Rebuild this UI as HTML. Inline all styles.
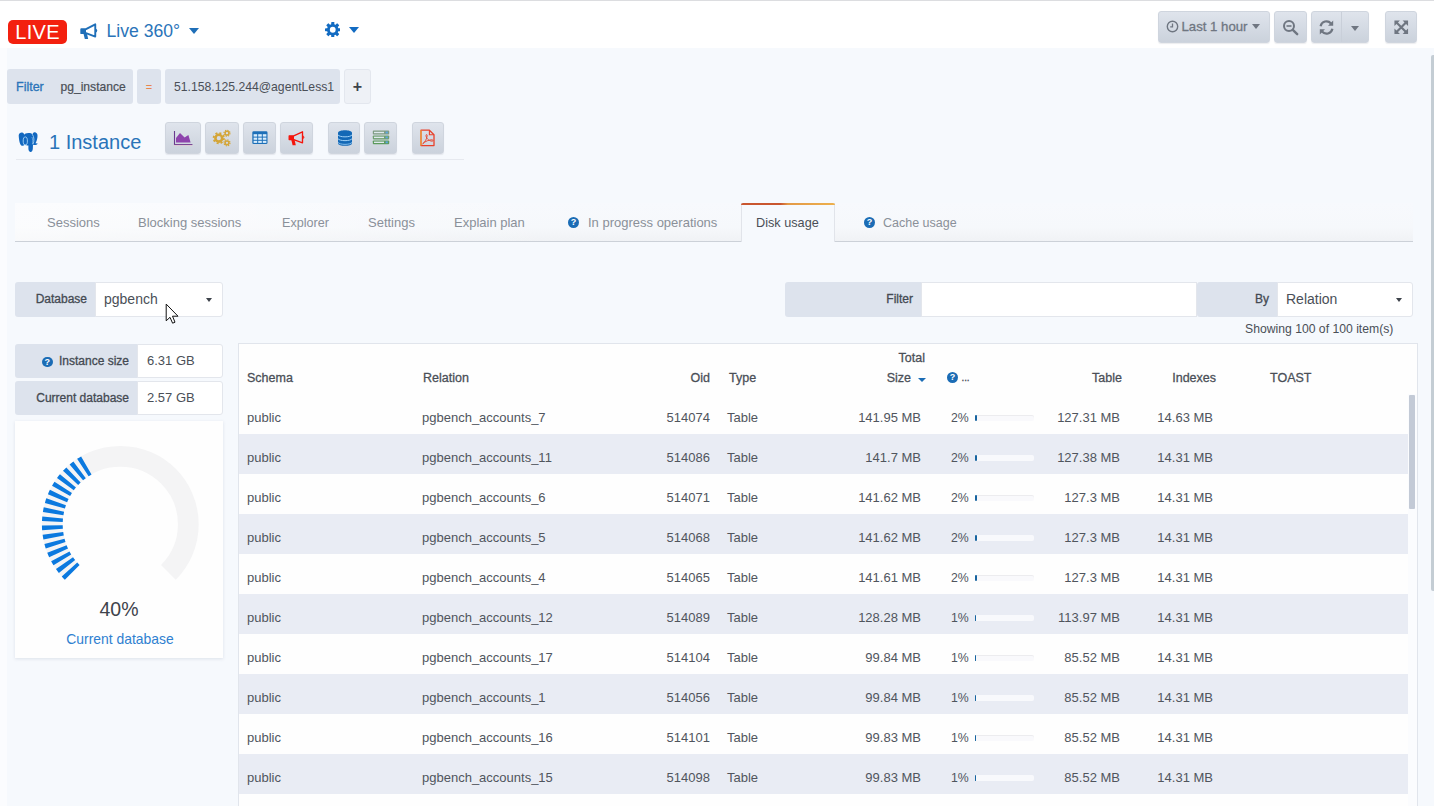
<!DOCTYPE html>
<html>
<head>
<meta charset="utf-8">
<title>Live 360</title>
<style>
*{box-sizing:border-box;margin:0;padding:0}
html,body{width:1434px;height:806px;overflow:hidden}
body{font-family:"Liberation Sans",sans-serif;background:#f6f9fd;color:#4a4f57;position:relative;font-size:13px}
.abs{position:absolute}
#topline{left:0;top:0;width:1434px;height:1px;background:#dcdde0}
#header{left:0;top:1px;width:1434px;height:47px;background:#fff}
#leftstrip{left:0;top:48px;width:7px;height:758px;background:#fbfcfe}
#live{left:8px;top:20px;width:59px;height:24px;background:#f3200f;border-radius:5px;color:#fff;font-size:20px;line-height:24px;text-align:center;letter-spacing:0.3px}
#title{left:106.500px;top:19px;font-size:17.600px;line-height:24px;color:#2a74b9;white-space:nowrap}
.caret{width:0;height:0;border-left:5px solid transparent;border-right:5px solid transparent;border-top:6px solid #1f6fb8}
.btn{border-radius:3px;background:linear-gradient(#dfe4ec,#cbd2dc);border:1px solid #cfd5de;box-shadow:0 1px 1px rgba(120,130,150,.15)}
.chip{background:#dde3ed;border-radius:3px;height:35px;top:69px;line-height:36px;font-size:12.200px;color:#4a4f57;white-space:nowrap}
.tab{top:213px;font-size:13px;line-height:20px;color:#8a9099;white-space:nowrap}
.lbl{background:#dde3ed;font-size:12px;color:#444a52;text-align:right;white-space:nowrap;-webkit-text-stroke:0.3px #444a52}
.inp{background:#fff;border:1px solid #e3e6ec;font-size:14.5px;color:#4a4f57;white-space:nowrap}
.q{width:11px;height:11px;border-radius:50%;background:#1b6cb5;color:#fff;font-size:9px;line-height:11px;text-align:center;font-weight:bold}
.th{font-size:12.5px;color:#4a4f57;white-space:nowrap;-webkit-text-stroke:0.28px #4a4f57;line-height:16px}
.row{left:239px;width:1169px;height:40px}
.row.alt{background:#e9ecf4}
.c{position:absolute;top:4px;line-height:40px;font-size:13px;color:#50555d;white-space:nowrap}
.r{text-align:right}
.bar{position:absolute;left:736px;top:21px;width:59px;height:6px;border-radius:2px;background:#f9f9fc;box-shadow:inset 0 1px 0 rgba(0,0,0,.05)}
.row.alt .bar{background:#f8f9fc;box-shadow:none}
.bar i{position:absolute;left:0;top:0;width:2.200px;height:6px;background:#17649f;border-radius:1px}
</style>
</head>
<body>
<div class="abs" id="header"></div>
<div class="abs" id="topline"></div>
<div class="abs" id="leftstrip"></div>

<!-- header -->
<div class="abs" id="live">LIVE</div>
<svg class="abs" style="left:79.500px;top:23px" width="20" height="18" viewBox="0 0 19 17"><path d="M2 6h4l8-5v12l-8-4H2z M4 10h3l1 5H5z" fill="none"/><path d="M1.2 5.8h4.5L14.5 1.2v11.6L5.7 9.6H1.2z" fill="none" stroke="#1f6fb8" stroke-width="1.8" stroke-linejoin="round"/><path d="M1.2 5.8h4.5v3.8H1.2z" fill="#1f6fb8"/><path d="M3.2 9.6h3.3l1.3 5.6H4.6z" fill="#1f6fb8"/><path d="M15.2 5.3a2 2 0 0 1 0 3.6z" fill="#1f6fb8"/></svg>
<div class="abs" id="title">Live 360°</div>
<div class="abs caret" style="left:189px;top:28px"></div>

<!-- gear -->
<svg class="abs" style="left:324.800px;top:21.800px" width="15.500" height="15.500" viewBox="0 0 16 16"><g fill="#126bc2"><circle cx="8" cy="8" r="5.900"/><rect x="6.400" y="0" width="3.200" height="16" rx=".5"/><rect x="6.400" y="0" width="3.200" height="16" rx=".5" transform="rotate(45 8 8)"/><rect x="6.400" y="0" width="3.200" height="16" rx=".5" transform="rotate(90 8 8)"/><rect x="6.400" y="0" width="3.200" height="16" rx=".5" transform="rotate(135 8 8)"/></g><circle cx="8" cy="8" r="3" fill="#fff"/></svg>
<div class="abs caret" style="left:349px;top:27px;border-top-color:#126bc2"></div>

<!-- right header buttons -->
<div class="abs btn" style="left:1158px;top:11px;width:112px;height:32px"></div>
<svg class="abs" style="left:1166px;top:19.500px" width="13" height="13" viewBox="0 0 13 13"><circle cx="6.5" cy="6.5" r="5.2" fill="none" stroke="#6f7681" stroke-width="1.4"/><path d="M6.5 3.4v3.4H4.2" fill="none" stroke="#6f7681" stroke-width="1.3"/></svg>
<div class="abs" style="left:1181.500px;top:17px;font-size:13.200px;line-height:20px;color:#6f7681;white-space:nowrap;-webkit-text-stroke:0.3px #6f7681">Last 1 hour</div>
<div class="abs caret" style="left:1252px;top:24px;border-left-width:4.5px;border-right-width:4.5px;border-top:5px solid #6f7681"></div>

<div class="abs btn" style="left:1274px;top:11px;width:33px;height:32px"></div>
<svg class="abs" style="left:1282px;top:19px" width="17" height="17" viewBox="0 0 17 17"><circle cx="7" cy="7" r="5" fill="none" stroke="#6f7681" stroke-width="2"/><path d="M4.5 7h5" stroke="#6f7681" stroke-width="1.6"/><path d="M10.8 10.8l4.4 4.4" stroke="#6f7681" stroke-width="2.4" stroke-linecap="round"/></svg>

<div class="abs btn" style="left:1311px;top:11px;width:58px;height:32px"></div>
<div class="abs" style="left:1341px;top:12px;width:1px;height:30px;background:#c9cfd9"></div>
<svg class="abs" style="left:1318px;top:19px" width="17" height="17" viewBox="0 0 17 17"><g fill="none" stroke="#6f7681" stroke-width="2.2"><path d="M2.6 7.2A6 6 0 0 1 13 4.4"/><path d="M14.4 9.8A6 6 0 0 1 4 12.6"/></g><path d="M15.2 1.6v5.2H10z" fill="#6f7681"/><path d="M1.8 15.4v-5.2H7z" fill="#6f7681"/></svg>
<div class="abs caret" style="left:1351px;top:26px;border-left-width:4.5px;border-right-width:4.5px;border-top:5px solid #6f7681"></div>

<div class="abs btn" style="left:1385px;top:11px;width:32px;height:32px"></div>
<svg class="abs" style="left:1394px;top:20px" width="14.500" height="14.500" viewBox="0 0 16 16"><g stroke="#6f7681" stroke-width="2.4"><path d="M2.5 2.5l11 11M13.5 2.5l-11 11"/></g><g fill="#6f7681"><path d="M.5.5h6l-6 6z"/><path d="M15.5.5v6l-6-6z"/><path d="M.5 15.5v-6l6 6z"/><path d="M15.5 15.5h-6l6-6z"/></g></svg>

<!-- filter chips -->
<div class="abs chip" style="left:7px;width:126px"></div>
<div class="abs" style="left:16px;top:69px;line-height:36px;font-size:12.500px;color:#2a74b9;-webkit-text-stroke:0.3px #2a74b9">Filter</div>
<div class="abs" style="left:60.500px;top:69px;line-height:36px;font-size:12.100px;color:#4a4f57;-webkit-text-stroke:0.2px #4a4f57">pg_instance</div>
<div class="abs chip" style="left:137px;width:24px;text-align:center;color:#e8864f;font-size:11px">=</div>
<div class="abs chip" style="left:165px;width:175px;padding-left:9px">51.158.125.244@agentLess1</div>
<div class="abs chip" style="left:344px;width:27px;background:#eef1f6;border:1px solid #e3e7ee;text-align:center;color:#3e434b;font-weight:bold;font-size:16px;line-height:33px">+</div>

<!-- instance row -->
<div class="abs" style="left:49px;top:129px;font-size:20px;line-height:26px;color:#2a74b9;white-space:nowrap">1 Instance</div>
<div class="abs" style="left:16px;top:159px;width:448px;height:1px;background:#e6e9ef"></div>
<div class="abs btn" style="left:165px;top:122px;width:36px;height:32px"></div>
<div class="abs btn" style="left:205px;top:122px;width:34px;height:32px"></div>
<div class="abs btn" style="left:243px;top:122px;width:33px;height:32px"></div>
<div class="abs btn" style="left:280px;top:122px;width:33px;height:32px"></div>
<div class="abs btn" style="left:328px;top:122px;width:32px;height:32px"></div>
<div class="abs btn" style="left:364px;top:122px;width:33px;height:32px"></div>
<div class="abs btn" style="left:412px;top:122px;width:32px;height:32px"></div>

<!-- elephant -->
<svg class="abs" style="left:18px;top:131px" width="21" height="22" viewBox="0 0 21 22">
<path d="M.7 4.500C.7 2.200 2.500 1.300 4 1.400C5.400 1.500 6 2.400 6.300 3.800C6.800 2.400 8 2 10.500 1.900C12.500 1.900 13.800 2.300 14.400 3.400C14.800 1.600 16.400 1.100 17.600 1.400C19.400 1.900 19.800 4 19.400 6.500C19 9 18.400 10.800 17.500 12.300L19.700 12.400C19.100 13.800 16.600 14.300 15 13.700L14.800 18C14.600 20.400 13.400 21.100 12.400 20.900C11 20.600 10.400 19.400 10.400 17.600L10.400 14.500C9 14.500 7.600 14.100 6.800 13.300C6 14.500 5 15 4 14.800C2 14.400 1 10 .7 4.500Z" fill="#1268c0"/>
<g fill="none" stroke="#b5defb" stroke-width=".8"><ellipse cx="7.300" cy="10" rx="2.100" ry="4.100"/><path d="M14.300 3.300C16.300 6 16.400 10 14.900 13.400"/><path d="M13.900 6C14.900 8 14.900 11 14.400 13" stroke-width=".5"/></g>
</svg>

<!-- icon 1 area chart -->
<svg class="abs" style="left:173px;top:130px" width="21" height="17" viewBox="0 0 21 17"><path d="M3 12.6V8L7 3l4.6 4.6L15.4 5l2.2 7.6z" fill="#8e44ad"/><path d="M1.5 1v13.5H19.4" fill="none" stroke="#6a3a8f" stroke-width="1.1"/><path d="M1 15.3H19.4" stroke="#e9b9c6" stroke-width=".6"/></svg>
<!-- icon 2 gears -->
<svg class="abs" style="left:212px;top:129px" width="20" height="19" viewBox="0 0 20 19"><g fill="none" stroke="#d4a537"><circle cx="6.8" cy="9.2" r="3.4" stroke-width="2.6"/><circle cx="6.8" cy="9.2" r="5.2" stroke-width="1.8" stroke-dasharray="2 2.08"/><circle cx="15" cy="4.2" r="1.9" stroke-width="1.5"/><circle cx="15" cy="4.2" r="3" stroke-width="1.2" stroke-dasharray="1.2 1.16"/><circle cx="15" cy="13.8" r="1.9" stroke-width="1.5"/><circle cx="15" cy="13.8" r="3" stroke-width="1.2" stroke-dasharray="1.2 1.16"/></g></svg>
<!-- icon 3 table -->
<svg class="abs" style="left:252px;top:131px" width="16" height="14" viewBox="0 0 16 14"><rect x=".3" y=".3" width="15.2" height="12.8" rx="1.4" fill="#1d6fb8"/><g fill="#d9edfc"><rect x="1.6" y="3.2" width="3.6" height="2.4"/><rect x="6.2" y="3.2" width="3.6" height="2.4"/><rect x="10.8" y="3.2" width="3.6" height="2.4"/><rect x="1.6" y="6.6" width="3.6" height="2.2"/><rect x="6.2" y="6.6" width="3.6" height="2.2"/><rect x="10.8" y="6.6" width="3.6" height="2.2"/><rect x="1.6" y="9.8" width="3.6" height="2.1"/><rect x="6.2" y="9.8" width="3.6" height="2.1"/><rect x="10.8" y="9.8" width="3.6" height="2.1"/></g></svg>
<!-- icon 4 megaphone red -->
<svg class="abs" style="left:288px;top:130px" width="19" height="17" viewBox="0 0 19 17"><path d="M1.200 5.800h4.500L14.500 1.800v11L5.700 9.600H1.200z" fill="none" stroke="#f4150c" stroke-width="1.350" stroke-linejoin="round"/><path d="M1.2 5.8h4.8v3.8H1.2z" fill="#f4150c"/><path d="M3.2 9.6h3.3l1.3 5.6H4.6z" fill="#f4150c"/><path d="M15.2 5.6a1.9 1.9 0 0 1 0 3.4z" fill="#f4150c"/></svg>
<!-- icon 5 database -->
<svg class="abs" style="left:337px;top:129px" width="16" height="18" viewBox="0 0 16 18"><path d="M1 3.800C1 .300 15 .300 15 3.800V14.200C15 17.700 1 17.700 1 14.200z" fill="#1368b6"/><g fill="none" stroke="#9fd0f6" stroke-width="1"><path d="M1 5.900C2.500 8.500 13.500 8.500 15 5.900"/><path d="M1 9.700C2.500 12.300 13.500 12.300 15 9.700"/><path d="M1 13.400C2.500 16 13.500 16 15 13.400" stroke-width=".8"/></g></svg>
<!-- icon 6 server -->
<svg class="abs" style="left:372px;top:130px" width="18" height="15" viewBox="0 0 18 15"><g><rect x=".8" y=".6" width="16.4" height="3.9" rx=".8" fill="#7f9c83"/><rect x=".8" y="5.500" width="16.4" height="3.900" rx=".8" fill="#6fa070"/><rect x=".8" y="10.400" width="16.4" height="3.900" rx=".8" fill="#5c9a5c"/><g fill="#dfe9ee"><rect x="2" y="1.800" width="10" height="1.400"/><rect x="2" y="6.700" width="10" height="1.400"/><rect x="2" y="11.600" width="10" height="1.400"/></g><g fill="#5aa7e6"><rect x="13.600" y="1.600" width="2.200" height="1.800"/><rect x="13.600" y="6.500" width="2.200" height="1.800"/><rect x="13.600" y="11.400" width="2.200" height="1.800"/></g></g></svg>
<!-- icon 7 pdf -->
<svg class="abs" style="left:419px;top:129px" width="17" height="18" viewBox="0 0 17 18"><path d="M2 1.200h8.400l4.600 4.600v10.800H2z" fill="none" stroke="#e8412a" stroke-width="1.300" stroke-linejoin="round"/><path d="M2 1.200v15.400" stroke="#eda13a" stroke-width="1.300"/><path d="M10.400 1.200v4.600h4.600" fill="none" stroke="#e8412a" stroke-width="1.100"/><path d="M3.600 14.800c2.200-1.400 4.200-4.600 4.600-8.200c.2-1.200-1.200-1.400-1.200-.2c0 2.600 2.600 5.600 6.200 5.800c1.400 0 1.200-1.400-.2-1.400c-2.800 0-6.800 1.400-9.400 4z" fill="none" stroke="#e8412a" stroke-width=".9"/></svg>

<!-- tabs -->
<div class="abs" style="left:15px;top:203px;width:1398px;height:38px;background:linear-gradient(90deg,rgba(255,255,255,.55) 0%,rgba(255,255,255,0) 40%),linear-gradient(#f7f9fd 0%,#f6f8fb 65%,#f0f2f5 100%)"></div>
<div class="abs" style="left:15px;top:241px;width:1398px;height:1px;background:#ccd1d8"></div>
<div class="abs tab" style="left:47px">Sessions</div>
<div class="abs tab" style="left:138px">Blocking sessions</div>
<div class="abs tab" style="left:282px;font-size:12.6px">Explorer</div>
<div class="abs tab" style="left:368px">Settings</div>
<div class="abs tab" style="left:454px">Explain plan</div>
<div class="abs q" style="left:568px;top:217px">?</div>
<div class="abs tab" style="left:588px">In progress operations</div>
<div class="abs" style="left:741px;top:203px;width:94px;height:39px;background:#f6f9fd;border-left:1px solid #e1e4ea;border-right:1px solid #e1e4ea"></div>
<div class="abs" style="left:741px;top:203px;width:94px;height:2px;border-radius:2px 2px 0 0;background:linear-gradient(90deg,#c9562f 0%,#c9562f 42%,#e39a47 50%,#edb04d 100%)"></div>
<div class="abs tab" style="left:756px;color:#4a4f57;font-size:12.7px">Disk usage</div>
<div class="abs q" style="left:864px;top:217px">?</div>
<div class="abs tab" style="left:883px;font-size:12.5px">Cache usage</div>

<!-- database selector -->
<div class="abs lbl" style="left:15px;top:282px;width:81px;height:35px;line-height:35px;padding-right:9px;border-radius:3px 0 0 3px">Database</div>
<div class="abs inp" style="left:95px;top:282px;width:128px;height:35px;line-height:33px;padding-left:8px;font-size:14px;border-radius:0 3px 3px 0">pgbench</div>
<div class="abs caret" style="left:205.800px;top:298px;border-left-width:3.300px;border-right-width:3.300px;border-top:4px solid #3e434b"></div>

<!-- filter + by -->
<div class="abs lbl" style="left:785px;top:282px;width:137px;height:35px;line-height:35px;padding-right:9px;border-radius:3px 0 0 3px">Filter</div>
<div class="abs inp" style="left:921px;top:282px;width:276px;height:35px"></div>
<div class="abs lbl" style="left:1197px;top:282px;width:81px;height:35px;line-height:35px;padding-right:9px;border-radius:3px 0 0 3px">By</div>
<div class="abs inp" style="left:1277px;top:282px;width:136px;height:35px;line-height:33px;padding-left:8px;font-size:14px;border-radius:0 3px 3px 0">Relation</div>
<div class="abs caret" style="left:1395.500px;top:298px;border-left-width:3.300px;border-right-width:3.300px;border-top:4px solid #3e434b"></div>
<div class="abs" style="left:1245px;top:321px;font-size:12.2px;line-height:16px;color:#4a4f57;white-space:nowrap">Showing 100 of 100 item(s)</div>

<!-- left panel -->
<div class="abs lbl" style="left:15px;top:344px;width:123px;height:34px;line-height:34px;padding-right:9px;border-radius:3px 0 0 3px">Instance size</div>
<div class="abs q" style="left:42px;top:356.500px;width:10.500px;height:10.500px;line-height:10.500px;font-size:9px">?</div>
<div class="abs inp" style="left:137px;top:344px;width:86px;height:34px;line-height:32px;padding-left:9px;font-size:13px;border-radius:0 3px 3px 0">6.31 GB</div>
<div class="abs lbl" style="left:15px;top:381px;width:123px;height:34px;line-height:34px;padding-right:9px;border-radius:3px 0 0 3px">Current database</div>
<div class="abs inp" style="left:137px;top:381px;width:86px;height:34px;line-height:32px;padding-left:9px;font-size:13px;border-radius:0 3px 3px 0">2.57 GB</div>
<div class="abs" style="left:15px;top:421px;width:208px;height:237px;background:#fefefe;box-shadow:0 1px 3px rgba(150,160,180,.25)"></div>
<div class="abs" style="left:15px;top:597px;width:208px;text-align:center;font-size:19.5px;line-height:24px;color:#3e434b">40%</div>
<div class="abs" style="left:15px;top:630px;width:210px;text-align:center;font-size:13.900px;line-height:18px;color:#2f80d0">Current database</div>

<!-- gauge -->
<svg class="abs" style="left:0;top:0" width="240" height="620" viewBox="0 0 240 620">
<path d="M72.22 572.38A68.0 68.0 0 1 1 168.38 572.38" fill="none" stroke="#f4f4f5" stroke-width="20.8"/>
<path d="M72.22 572.38A68.0 68.0 0 0 1 89.43 463.71" fill="none" stroke="#0b79df" stroke-width="20.8" stroke-dasharray="4.100 3.911"/>
</svg>

<!-- table -->
<div class="abs" style="left:238px;top:343px;width:1180px;height:470px;background:#fefefe;border:1px solid #e1e5ec"></div>
<div class="abs th" style="left:247px;top:370px">Schema</div>
<div class="abs th" style="left:423px;top:370px">Relation</div>
<div class="abs th r" style="left:650px;width:60px;top:370px">Oid</div>
<div class="abs th" style="left:729px;top:370px">Type</div>
<div class="abs th r" style="left:865px;width:60px;top:350px">Total</div>
<div class="abs th r" style="left:851px;width:60px;top:370px">Size</div>
<div class="abs caret" style="left:918px;top:378px;border-left-width:4px;border-right-width:4px;border-top:4.500px solid #1b6cb5"></div>
<div class="abs q" style="left:947px;top:372px">?</div>
<div class="abs th" style="left:961.500px;top:370px;font-size:10px;letter-spacing:-.1px">...</div>
<div class="abs th r" style="left:1062px;width:60px;top:370px">Table</div>
<div class="abs th r" style="left:1146px;width:70px;top:370px">Indexes</div>
<div class="abs th" style="left:1270px;top:370px">TOAST</div>
<div class="abs row" style="top:394px"><span class="c" style="left:8px">public</span><span class="c" style="left:183px">pgbench_accounts_7</span><span class="c r" style="left:401px;width:70px">514074</span><span class="c" style="left:488px">Table</span><span class="c r" style="left:592px;width:90px">141.95 MB</span><span class="c" style="left:712px;font-size:12.300px">2%</span><span class="bar"><i style="width:2.300px"></i></span><span class="c r" style="left:791px;width:90px">127.31 MB</span><span class="c r" style="left:884px;width:90px">14.63 MB</span></div>
<div class="abs row alt" style="top:434px"><span class="c" style="left:8px">public</span><span class="c" style="left:183px">pgbench_accounts_11</span><span class="c r" style="left:401px;width:70px">514086</span><span class="c" style="left:488px">Table</span><span class="c r" style="left:592px;width:90px">141.7 MB</span><span class="c" style="left:712px;font-size:12.300px">2%</span><span class="bar"><i style="width:2.300px"></i></span><span class="c r" style="left:791px;width:90px">127.38 MB</span><span class="c r" style="left:884px;width:90px">14.31 MB</span></div>
<div class="abs row" style="top:474px"><span class="c" style="left:8px">public</span><span class="c" style="left:183px">pgbench_accounts_6</span><span class="c r" style="left:401px;width:70px">514071</span><span class="c" style="left:488px">Table</span><span class="c r" style="left:592px;width:90px">141.62 MB</span><span class="c" style="left:712px;font-size:12.300px">2%</span><span class="bar"><i style="width:2.300px"></i></span><span class="c r" style="left:791px;width:90px">127.3 MB</span><span class="c r" style="left:884px;width:90px">14.31 MB</span></div>
<div class="abs row alt" style="top:514px"><span class="c" style="left:8px">public</span><span class="c" style="left:183px">pgbench_accounts_5</span><span class="c r" style="left:401px;width:70px">514068</span><span class="c" style="left:488px">Table</span><span class="c r" style="left:592px;width:90px">141.62 MB</span><span class="c" style="left:712px;font-size:12.300px">2%</span><span class="bar"><i style="width:2.300px"></i></span><span class="c r" style="left:791px;width:90px">127.3 MB</span><span class="c r" style="left:884px;width:90px">14.31 MB</span></div>
<div class="abs row" style="top:554px"><span class="c" style="left:8px">public</span><span class="c" style="left:183px">pgbench_accounts_4</span><span class="c r" style="left:401px;width:70px">514065</span><span class="c" style="left:488px">Table</span><span class="c r" style="left:592px;width:90px">141.61 MB</span><span class="c" style="left:712px;font-size:12.300px">2%</span><span class="bar"><i style="width:2.300px"></i></span><span class="c r" style="left:791px;width:90px">127.3 MB</span><span class="c r" style="left:884px;width:90px">14.31 MB</span></div>
<div class="abs row alt" style="top:594px"><span class="c" style="left:8px">public</span><span class="c" style="left:183px">pgbench_accounts_12</span><span class="c r" style="left:401px;width:70px">514089</span><span class="c" style="left:488px">Table</span><span class="c r" style="left:592px;width:90px">128.28 MB</span><span class="c" style="left:712px;font-size:12.300px">1%</span><span class="bar"><i style="width:1.300px"></i></span><span class="c r" style="left:791px;width:90px">113.97 MB</span><span class="c r" style="left:884px;width:90px">14.31 MB</span></div>
<div class="abs row" style="top:634px"><span class="c" style="left:8px">public</span><span class="c" style="left:183px">pgbench_accounts_17</span><span class="c r" style="left:401px;width:70px">514104</span><span class="c" style="left:488px">Table</span><span class="c r" style="left:592px;width:90px">99.84 MB</span><span class="c" style="left:712px;font-size:12.300px">1%</span><span class="bar"><i style="width:1.300px"></i></span><span class="c r" style="left:791px;width:90px">85.52 MB</span><span class="c r" style="left:884px;width:90px">14.31 MB</span></div>
<div class="abs row alt" style="top:674px"><span class="c" style="left:8px">public</span><span class="c" style="left:183px">pgbench_accounts_1</span><span class="c r" style="left:401px;width:70px">514056</span><span class="c" style="left:488px">Table</span><span class="c r" style="left:592px;width:90px">99.84 MB</span><span class="c" style="left:712px;font-size:12.300px">1%</span><span class="bar"><i style="width:1.300px"></i></span><span class="c r" style="left:791px;width:90px">85.52 MB</span><span class="c r" style="left:884px;width:90px">14.31 MB</span></div>
<div class="abs row" style="top:714px"><span class="c" style="left:8px">public</span><span class="c" style="left:183px">pgbench_accounts_16</span><span class="c r" style="left:401px;width:70px">514101</span><span class="c" style="left:488px">Table</span><span class="c r" style="left:592px;width:90px">99.83 MB</span><span class="c" style="left:712px;font-size:12.300px">1%</span><span class="bar"><i style="width:1.300px"></i></span><span class="c r" style="left:791px;width:90px">85.52 MB</span><span class="c r" style="left:884px;width:90px">14.31 MB</span></div>
<div class="abs row alt" style="top:754px"><span class="c" style="left:8px">public</span><span class="c" style="left:183px">pgbench_accounts_15</span><span class="c r" style="left:401px;width:70px">514098</span><span class="c" style="left:488px">Table</span><span class="c r" style="left:592px;width:90px">99.83 MB</span><span class="c" style="left:712px;font-size:12.300px">1%</span><span class="bar"><i style="width:1.300px"></i></span><span class="c r" style="left:791px;width:90px">85.52 MB</span><span class="c r" style="left:884px;width:90px">14.31 MB</span></div>

<!-- inner scrollbar -->
<div class="abs" style="left:1408px;top:394px;width:9px;height:412px;background:#fbfcfe"></div>
<div class="abs" style="left:1409px;top:395px;width:6px;height:114px;background:#c3cad6;border-radius:1px"></div>
<!-- page scrollbar -->
<div class="abs" style="left:1431px;top:55px;width:3px;height:536px;background:#c4cdd4;border-radius:2px 0 0 2px"></div>
<!-- cursor -->
<svg class="abs" style="left:165px;top:303px" width="14" height="22" viewBox="0 0 14 22"><path d="M1.200 1.100V17.800L5 14.300L7.600 20.200L10 19.200L7.500 13.200H13z" fill="#fff" stroke="#111" stroke-width="1" stroke-linejoin="round"/></svg>

</body>
</html>
